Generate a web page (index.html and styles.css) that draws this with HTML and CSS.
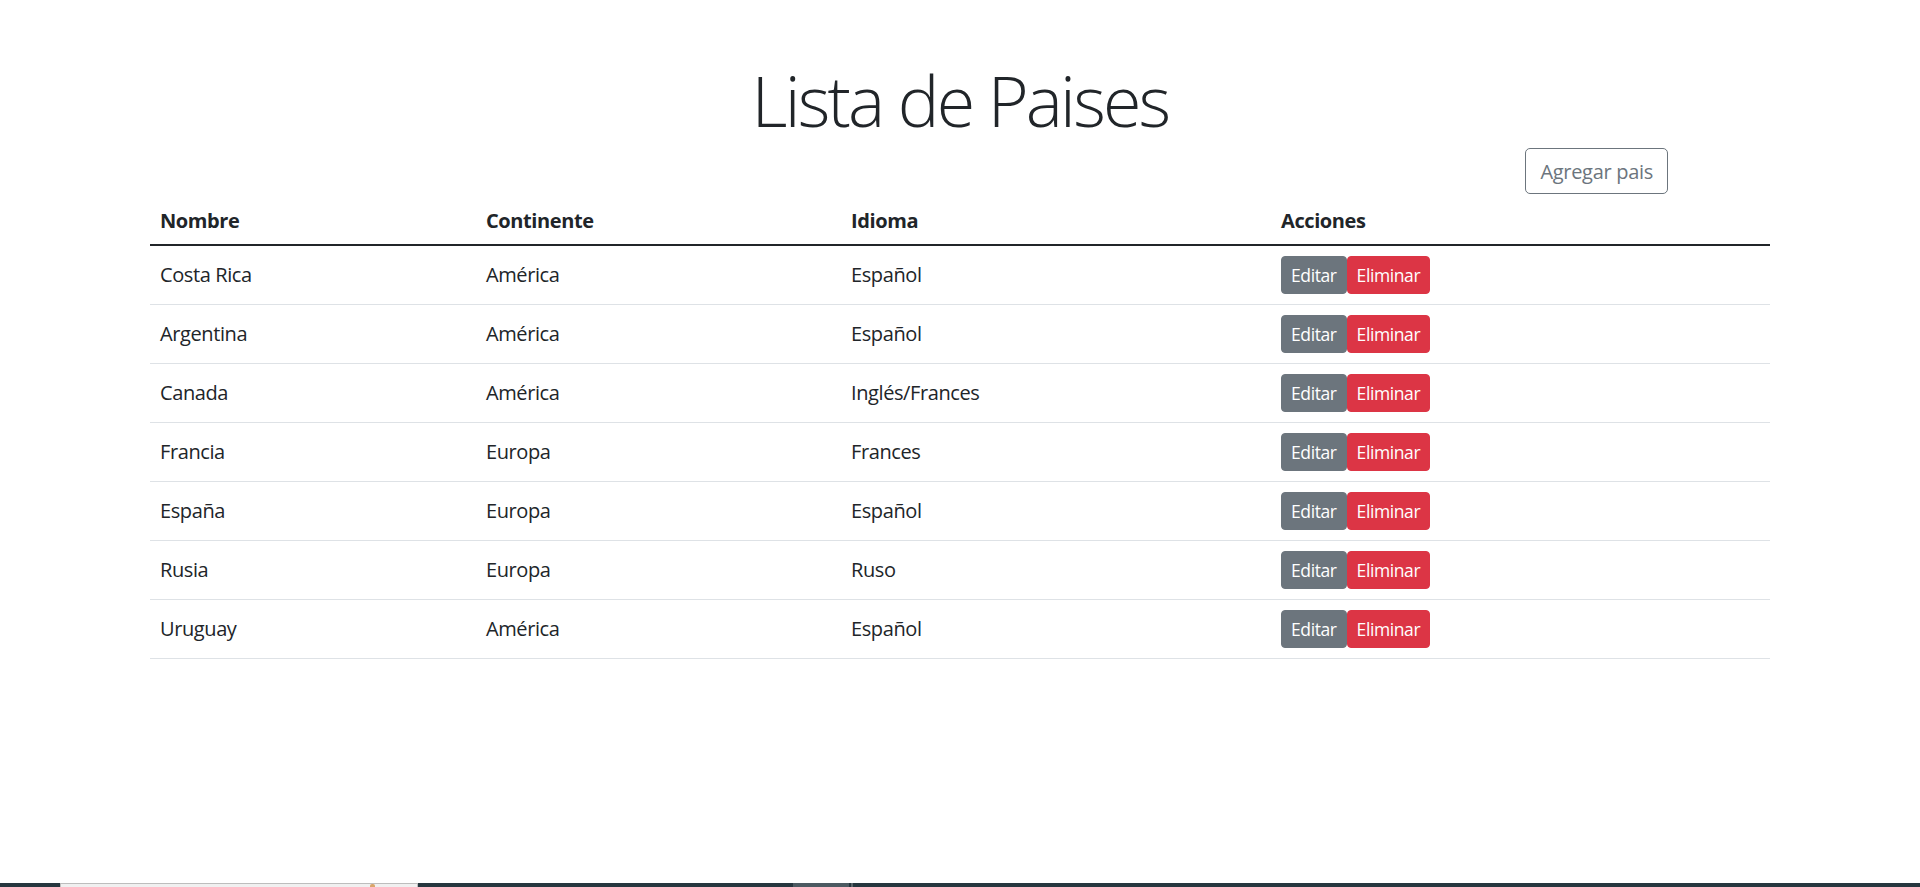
FILE: index.html
```html
<!DOCTYPE html>
<html lang="es">
<head>
<meta charset="utf-8">
<title>Lista de Paises</title>
<link rel="stylesheet" href="styles.css">
</head>
<body>
<main class="page">
  <div class="container">
    <h1 class="title">Lista de Paises</h1>
    <div class="toolbar">
      <button class="btn btn-outline">Agregar pais</button>
    </div>
    <table class="table">
      <colgroup>
        <col class="c1"><col class="c2"><col class="c3"><col class="c4">
      </colgroup>
      <thead>
        <tr><th>Nombre</th><th>Continente</th><th>Idioma</th><th>Acciones</th></tr>
      </thead>
      <tbody>
        <tr><td>Costa Rica</td><td>América</td><td>Español</td><td><div class="actions"><button class="btn-sm btn-edit">Editar</button><button class="btn-sm btn-del">Eliminar</button></div></td></tr>
        <tr><td>Argentina</td><td>América</td><td>Español</td><td><div class="actions"><button class="btn-sm btn-edit">Editar</button><button class="btn-sm btn-del">Eliminar</button></div></td></tr>
        <tr><td>Canada</td><td>América</td><td>Inglés/Frances</td><td><div class="actions"><button class="btn-sm btn-edit">Editar</button><button class="btn-sm btn-del">Eliminar</button></div></td></tr>
        <tr><td>Francia</td><td>Europa</td><td>Frances</td><td><div class="actions"><button class="btn-sm btn-edit">Editar</button><button class="btn-sm btn-del">Eliminar</button></div></td></tr>
        <tr><td>España</td><td>Europa</td><td>Español</td><td><div class="actions"><button class="btn-sm btn-edit">Editar</button><button class="btn-sm btn-del">Eliminar</button></div></td></tr>
        <tr><td>Rusia</td><td>Europa</td><td>Ruso</td><td><div class="actions"><button class="btn-sm btn-edit">Editar</button><button class="btn-sm btn-del">Eliminar</button></div></td></tr>
        <tr><td>Uruguay</td><td>América</td><td>Español</td><td><div class="actions"><button class="btn-sm btn-edit">Editar</button><button class="btn-sm btn-del">Eliminar</button></div></td></tr>
      </tbody>
    </table>
  </div>
</main>
<footer class="taskbar">
  <span class="tb-gap1"></span>
  <span class="tb-window"><span class="tb-icon"></span></span>
  <span class="tb-gap2"></span>
  <span class="tb-active"></span>
  <span class="tb-sep"></span>
</footer>
</body>
</html>
```
FILE: styles.css
```css
html, body {
  margin: 0;
  padding: 0;
}
body {
  display: flex;
  flex-direction: column;
  min-height: 100vh;
  font-family: "Open Sans", "Noto Sans", "Liberation Sans", sans-serif;
  font-size: 20px;
  line-height: 1.5;
  letter-spacing: -0.4px;
  color: #212529;
  background: #fff;
}
.page {
  flex: 1;
}
.container {
  width: 1620px;
  margin: 0 auto;
}
.title {
  margin: 58px 0 6px;
  font-size: 70px;
  font-weight: 300;
  line-height: 84px;
  letter-spacing: -2.8px;
  text-align: center;
}
.toolbar {
  display: flex;
  justify-content: flex-end;
  padding-right: 102px;
}
.btn {
  font-family: inherit;
  cursor: pointer;
}
.btn-outline {
  height: 46px;
  padding: 0 14px;
  font-size: 20px;
  letter-spacing: -0.3px;
  color: #6c757d;
  background: #fff;
  border: 1px solid #6c757d;
  border-radius: 5px;
}
.table {
  width: 100%;
  border-collapse: collapse;
}
.c1 { width: 326px; }
.c2 { width: 365px; }
.c3 { width: 430px; }
.c4 { width: 499px; }
.table th {
  text-align: left;
  font-weight: 700;
  padding: 12px 10px 8px;
  line-height: 30px;
  border-bottom: 2px solid #212529;
}
.table td {
  padding: 10px;
  line-height: 30px;
  vertical-align: middle;
  border-bottom: 1px solid #dee2e6;
}
.actions {
  display: flex;
}
.btn-sm {
  height: 38px;
  padding: 0 9px;
  font-family: inherit;
  font-size: 17.5px;
  letter-spacing: -0.4px;
  color: #fff;
  border: 1px solid transparent;
  border-radius: 4px;
  cursor: pointer;
}
.btn-edit {
  background: #6c757d;
  border-color: #6c757d;
}
.btn-del {
  background: #dc3545;
  border-color: #dc3545;
}
.taskbar {
  display: flex;
  height: 4px;
  background: #26363e;
}
.tb-gap1 { width: 60px; }
.tb-window {
  display: flex;
  justify-content: flex-end;
  width: 358px;
  background: #f0f0f0;
  border-top: 1px solid #bdbdbd;
  border-left: 1px solid #bdbdbd;
  border-right: 1px solid #bdbdbd;
  box-sizing: border-box;
}
.tb-icon {
  width: 5px;
  margin-right: 42px;
  background: #d9a56a;
  border-radius: 2px 2px 0 0;
}
.tb-gap2 { width: 375px; }
.tb-active {
  width: 56px;
  background: #4c5a61;
}
.tb-sep {
  width: 2px;
  margin-left: 2px;
  background: #5a666b;
}
```
